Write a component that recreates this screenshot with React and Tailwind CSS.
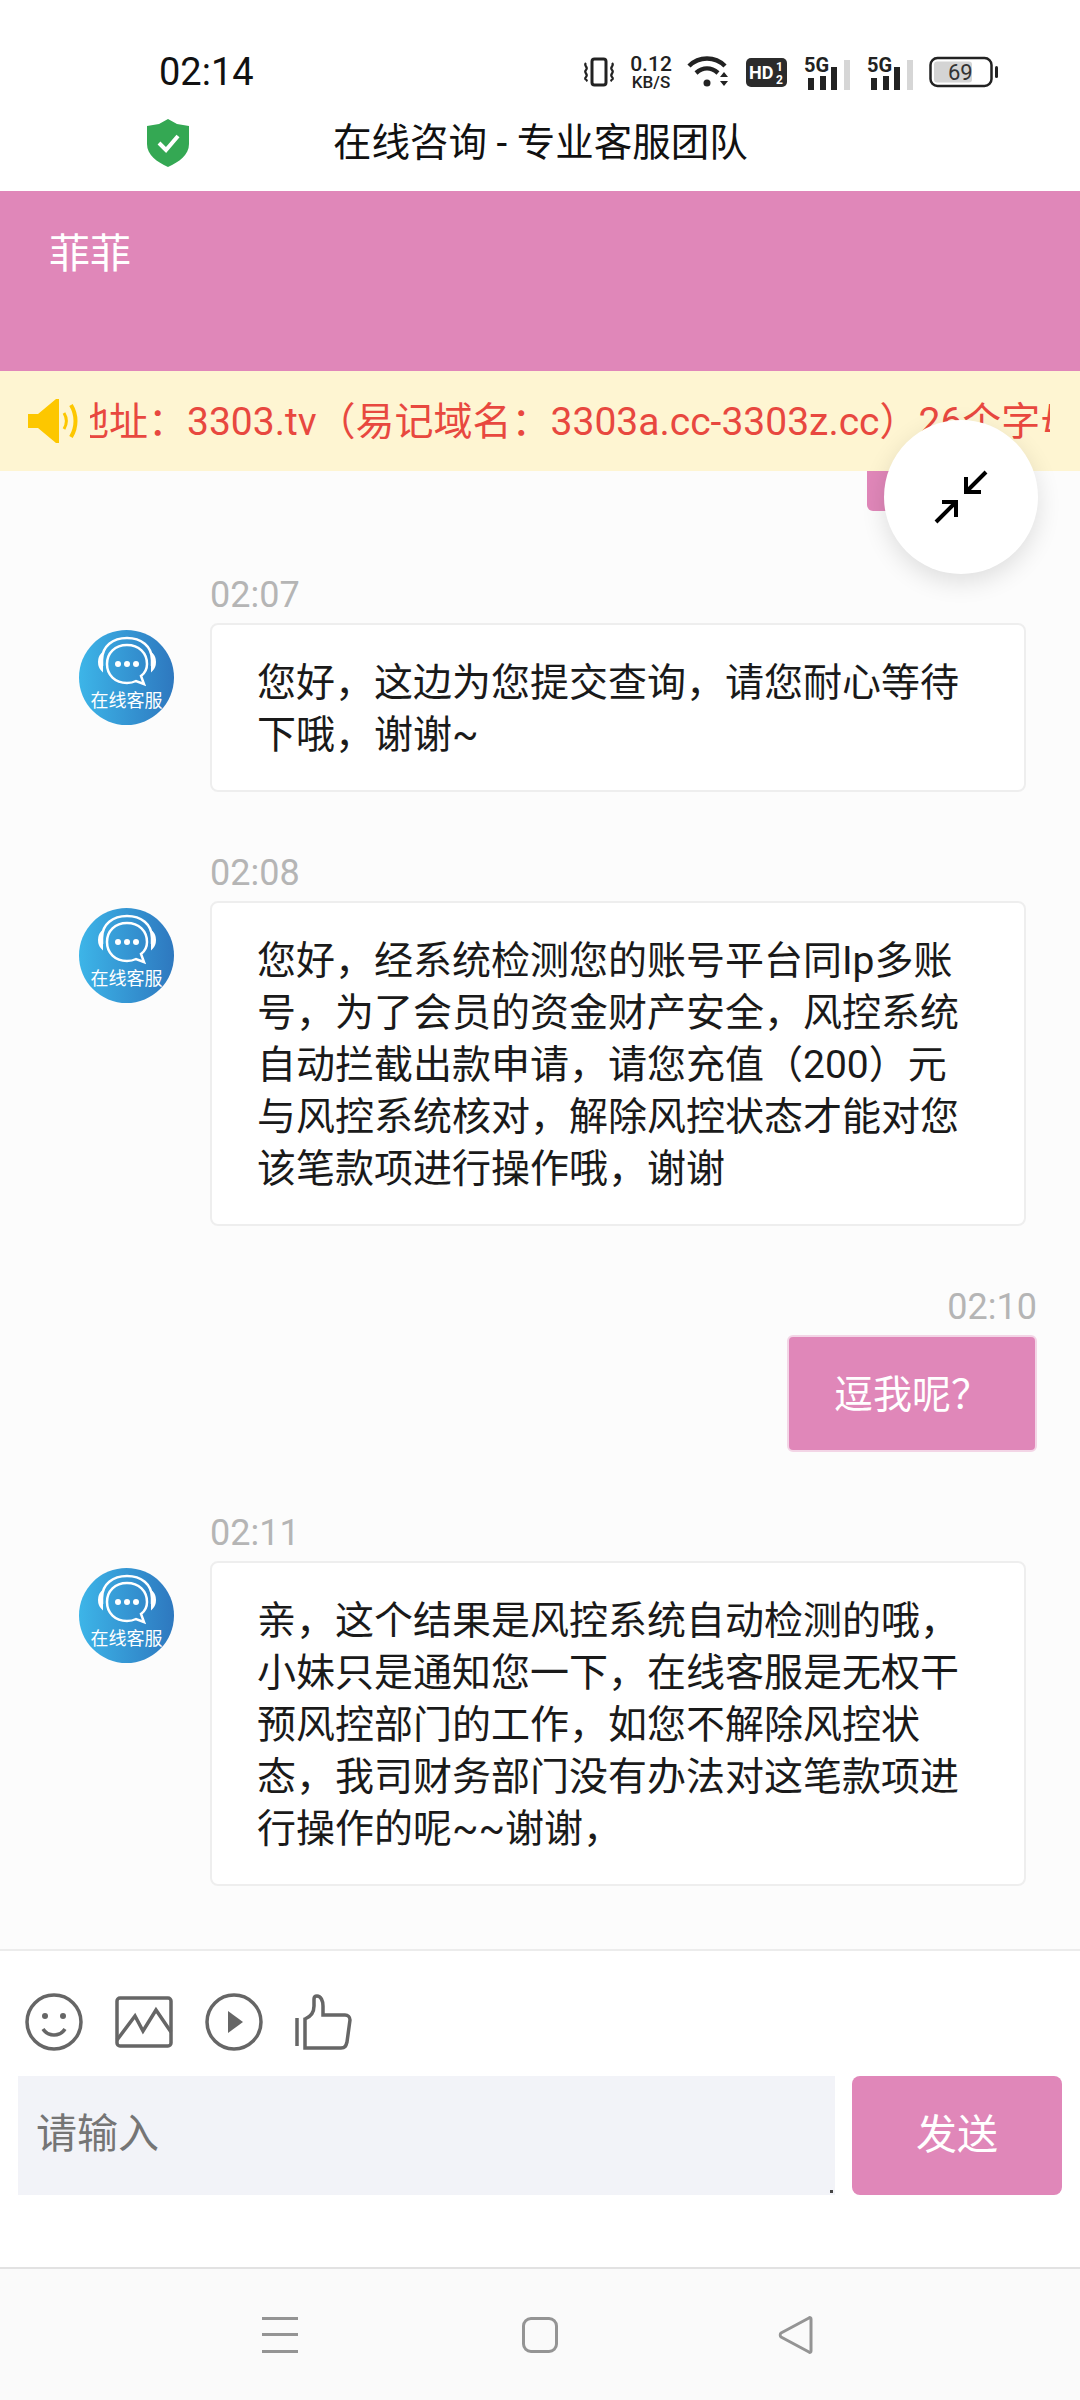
const FONT = "font-['Roboto','Noto_Sans_CJK_SC',sans-serif]";

function StatusIcons() {
  return (
    <div className="ml-auto mr-[81px] flex items-center">
      {/* vibrate */}
      <svg width="34" height="32" viewBox="0 0 34 32" fill="none" stroke="#222" strokeWidth="3">
        <rect x="10" y="3" width="14" height="26" rx="2.5" />
        <path d="M4 7c-3 3 3 4 0 7s3 4 0 7 3 3 0 4M30 7c3 3-3 4 0 7s-3 4 0 7-3 3 0 4" strokeWidth="2.2" />
      </svg>
      <div className="ml-[13px] flex w-[44px] flex-col items-center text-[#222]">
        <span className="text-[21px] font-medium leading-[20px]">0.12</span>
        <span className="text-[17px] font-medium leading-[16px]">KB/S</span>
      </div>
      {/* wifi */}
      <svg className="ml-[14px]" width="44" height="34" viewBox="0 0 44 34" fill="none" stroke="#222" strokeWidth="4.5">
        <path d="M2 11C12 1 28 1 38 11" />
        <path d="M9 18c7-6 15-6 22 0" />
        <circle cx="20" cy="28" r="3.5" fill="#222" stroke="none" />
        <path d="M33 22l4-5 4 5zM33 26l4 5 4-5z" fill="#222" stroke="none" />
      </svg>
      {/* HD badge */}
      <svg className="ml-[15px]" width="41" height="29" viewBox="0 0 41 29">
        <rect width="41" height="29" rx="5" fill="#2b2b2b" />
        <text x="3" y="21" fontSize="18" fontWeight="700" fill="#fff" fontFamily="Roboto">HD</text>
        <text x="30" y="13" fontSize="12" fontWeight="700" fill="#fff" fontFamily="Roboto">1</text>
        <text x="30" y="26" fontSize="12" fontWeight="700" fill="#fff" fontFamily="Roboto">2</text>
      </svg>
      <Signal className="ml-[17px]" />
      <Signal className="ml-[16px]" />
      {/* battery */}
      <svg className="ml-[15px]" width="70" height="32" viewBox="0 0 70 32">
        <rect x="1.5" y="2" width="61" height="28" rx="7" fill="#fff" stroke="#222" strokeWidth="2.5" />
        <rect x="5" y="5.5" width="38" height="21" rx="3" fill="#d4d4d4" />
        <rect x="66" y="10" width="3" height="12" rx="1.5" fill="#222" />
        <text x="19" y="24" fontSize="22" fill="#333" fontFamily="Roboto">69</text>
      </svg>
    </div>
  );
}

function Signal({ className }) {
  return (
    <svg className={className} width="47" height="38" viewBox="0 -6 47 38">
      <text x="0" y="13" fontSize="20" fontWeight="700" fill="#222" fontFamily="Roboto">5G</text>
      <rect x="4" y="19" width="6" height="12" fill="#222" />
      <rect x="16" y="17" width="6" height="14" fill="#222" />
      <rect x="27" y="8" width="6" height="23" fill="#222" />
      <rect x="40" y="1" width="6" height="30" fill="#d6d6d6" />
    </svg>
  );
}

function Shield() {
  return (
    <svg width="42" height="48" viewBox="0 0 42 48">
      <path d="M21 0l9 5 12 2v18c0 11-10 18-21 23C10 43 0 36 0 25V7l12-2z" fill="#34a853" />
      <path d="M12 24l7 7 12-14" fill="none" stroke="#fff" strokeWidth="4" />
    </svg>
  );
}

function Speaker() {
  return (
    <svg width="50" height="44" viewBox="0 0 50 44" fill="none">
      <path d="M0 15h10L28 0h3v44h-3L10 29H0z" fill="#fdc700" />
      <path d="M36 14c3 5 3 11 0 16" stroke="#fdc700" strokeWidth="3" />
      <path d="M43 6c6 10 6 22 0 32" stroke="#fdc700" strokeWidth="4" />
    </svg>
  );
}

function Avatar() {
  return (
    <div className="mt-[55px] flex h-[95px] w-[95px] shrink-0 flex-col items-center rounded-full bg-gradient-to-r from-[#3db5e8] to-[#2e78bf]">
      <svg className="mt-[6px]" width="62" height="56" viewBox="0 0 62 56" fill="none" stroke="#fff">
        <path d="M6 30V24C6 10 17 2 31 2s25 8 25 22v6" strokeWidth="2.5" />
        <path d="M6 18C2 22 2 30 6 34zM56 18c4 4 4 12 0 16z" fill="#fff" strokeWidth="2" />
        <path d="M31 9c-12 0-20 8-20 19s8 19 20 19c4 0 7-1 9-2l8 3-3-8c4-3 6-7 6-12 0-11-8-19-20-19z" strokeWidth="2.5" />
        <circle cx="22" cy="28" r="3" fill="#fff" stroke="none" />
        <circle cx="31" cy="28" r="3" fill="#fff" stroke="none" />
        <circle cx="40" cy="28" r="3" fill="#fff" stroke="none" />
      </svg>
      <span className="mt-[-1px] text-[18px] leading-[20px] text-white">在线客服</span>
    </div>
  );
}

function LeftMessage({ time, children }) {
  return (
    <div className="flex pl-[79px]">
      <Avatar />
      <div className="ml-[36px] w-[816px]">
        <div className="mb-[8px] text-[36px] leading-[40px] text-[#b5b5b5]">{time}</div>
        <div className="rounded-[8px] border-2 border-[#eeeeee] bg-white px-[45px] pb-[29px] pt-[32px] text-[39px] leading-[52px] text-[#1a1a1a]">
          {children}
        </div>
      </div>
    </div>
  );
}

export default function App() {
  return (
    <div className={`${FONT} relative flex h-[2400px] w-[1080px] flex-col overflow-hidden bg-white`}>
      {/* Status bar + title */}
      <header className="h-[191px] shrink-0 pt-[40px]">
        <div className="flex h-[64px] items-center pl-[159px]">
          <span className="text-[38px] leading-none text-[#111]">02:14</span>
          <StatusIcons />
        </div>
        <div className="flex h-[78px] items-center pl-[147px]">
          <Shield />
          <span className="ml-[144px] text-[38.5px] leading-none text-[#111]">在线咨询 - 专业客服团队</span>
        </div>
      </header>

      {/* Agent name */}
      <div className="h-[180px] shrink-0 bg-[#e087b9] pl-[49px] pt-[39px] text-[41px] leading-[48px] text-white">菲菲</div>

      {/* Notice */}
      <div className="flex h-[100px] shrink-0 items-center bg-[#fef5d2] pl-[28px] pr-[30px]">
        <Speaker />
        <div className="ml-[12px] flex-1 overflow-hidden whitespace-nowrap pt-[2px] text-[39px] leading-[52px] text-[#e8483f]">
          <span className="-ml-[20px] inline-block">地址：3303.tv（易记域名：3303a.cc-3303z.cc）26个字母</span>
        </div>
      </div>

      {/* Chat */}
      <main className="flex flex-1 flex-col gap-[61px] overflow-hidden bg-[#fcfcfc]">
        <div className="mb-[3px] mr-[50px] h-[40px] w-[163px] shrink-0 self-end rounded-b-[6px] bg-[#e087b9]" />

        <LeftMessage time="02:07">
          您好，这边为您提交查询，请您耐心等待下哦，谢谢~
        </LeftMessage>

        <LeftMessage time="02:08">
          您好，经系统检测您的账号平台同Ip多账号，为了会员的资金财产安全，风控系统自动拦截出款申请，请您充值（200）元与风控系统核对，解除风控状态才能对您该笔款项进行操作哦，谢谢
        </LeftMessage>

        <div className="flex flex-col items-end pr-[43px]">
          <div className="mb-[8px] text-[36px] leading-[40px] text-[#b5b5b5]">02:10</div>
          <div className="rounded-[6px] border-2 border-[#f3d5e6] bg-[#e087b9] px-[45px] pb-[29px] pt-[32px] text-[39px] leading-[52px] text-white">
            逗我呢？
          </div>
        </div>

        <LeftMessage time="02:11">
          亲，这个结果是风控系统自动检测的哦，小妹只是通知您一下，在线客服是无权干预风控部门的工作，如您不解除风控状态，我司财务部门没有办法对这笔款项进行操作的呢~~谢谢，
        </LeftMessage>
      </main>

      {/* Composer */}
      <footer className="shrink-0 border-t-2 border-[#ececec] bg-white pb-[72px]">
        <div className="flex h-[125px] items-center gap-[34px] pl-[25px] pt-[16px]">
          <svg width="58" height="58" viewBox="0 0 58 58" fill="none" stroke="#666" strokeWidth="3.5">
            <circle cx="29" cy="29" r="27" />
            <circle cx="20" cy="23" r="3" fill="#666" stroke="none" />
            <circle cx="38" cy="23" r="3" fill="#666" stroke="none" />
            <path d="M18 36c5 8 17 8 22 0" />
          </svg>
          <svg className="-ml-[2px]" width="58" height="52" viewBox="0 0 58 52" fill="none" stroke="#666" strokeWidth="3.5">
            <rect x="2" y="2" width="54" height="48" rx="3" />
            <path d="M2 44L20 20l8 15 13-21 15 22" />
          </svg>
          <svg className="-ml-[2px]" width="58" height="58" viewBox="0 0 58 58" fill="none" stroke="#666" strokeWidth="3.5">
            <circle cx="29" cy="29" r="27" />
            <path d="M23 18l15 11-15 11z" fill="#666" stroke="none" />
          </svg>
          <svg className="-ml-[2px]" width="58" height="56" viewBox="0 0 58 56" fill="none" stroke="#666" strokeWidth="3.5">
            <path d="M2 24v28" />
            <path d="M10 25c5-2 9-6 9-13V5c0-2 1-3 3-3 4 0 6 5 6 10v9h22c3 0 5 2 5 5l-3 22c-1 4-2 6-6 6H10z" />
          </svg>
        </div>
        <div className="flex h-[119px] gap-[17px] px-[18px]">
          <div className="relative w-[817px] bg-[#f2f3f8]">
            <textarea
              className="h-full w-full resize-none bg-transparent pl-[18px] pt-[34px] text-[41px] leading-[48px] outline-none placeholder:text-[#757575]"
              placeholder="请输入"
            />
            <span className="absolute bottom-[2px] right-[2px] h-[3px] w-[3px] bg-[#444]" />
          </div>
          <button className="flex-1 rounded-[8px] bg-[#e087b9] text-[41px] leading-none text-white">发送</button>
        </div>
      </footer>

      {/* Android nav */}
      <nav className="flex h-[133px] shrink-0 items-center border-t-2 border-[#e2e2e2] bg-[#fafafa] pl-[262px]">
        <div className="flex h-[36px] w-[36px] flex-col justify-between">
          <span className="h-[3px] bg-[#949494]" />
          <span className="h-[3px] bg-[#949494]" />
          <span className="h-[3px] bg-[#949494]" />
        </div>
        <div className="ml-[224px] h-[36px] w-[36px] rounded-[9px] border-[3px] border-[#949494]" />
        <svg className="ml-[220px]" width="36" height="38" viewBox="0 0 36 38" fill="none" stroke="#949494" strokeWidth="3">
          <path d="M33 3v32c0 1-1 2-2 1L3 21c-1-1-1-3 0-4L31 2c1-1 2 0 2 1z" strokeLinejoin="round" />
        </svg>
      </nav>

      {/* Floating collapse button */}
      <button className="absolute left-[884px] top-[420px] flex h-[154px] w-[154px] items-center justify-center rounded-full bg-white shadow-[0_8px_24px_rgba(0,0,0,0.12)]">
        <svg width="54" height="54" viewBox="0 0 54 54" fill="none" stroke="#000" strokeWidth="4">
          <path d="M52 2L33 21M32 7v15h15M2 52l19-19M8 32h14v15" />
        </svg>
      </button>
    </div>
  );
}
